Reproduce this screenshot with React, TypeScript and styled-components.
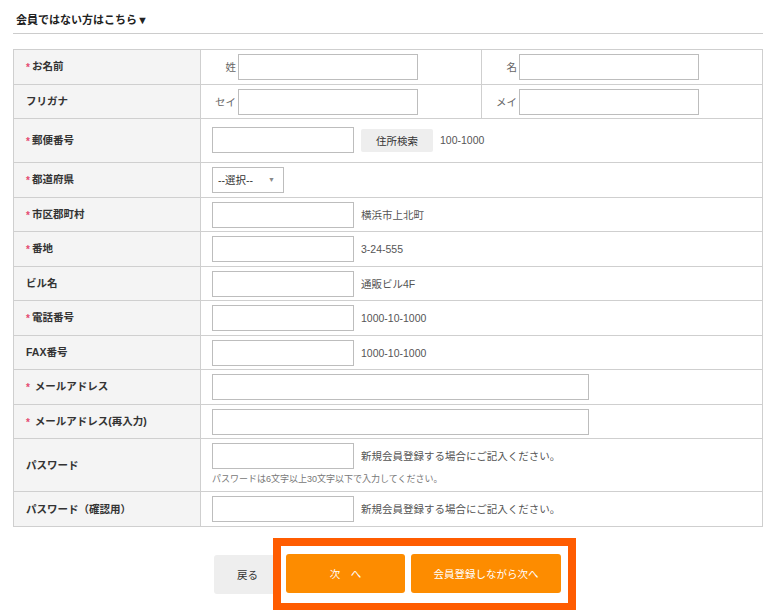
import React from 'react';
import styled, { createGlobalStyle } from 'styled-components';

const GlobalStyle = createGlobalStyle`
  body {
    margin: 0;
    background: #ffffff;
    font-family: "Liberation Sans", "Noto Sans CJK JP", sans-serif;
    color: #333333;
  }
`;

const Page = styled.div`
  width: 750px;
  margin-left: 13px;
`;

const Heading = styled.h2`
  margin: 0;
  padding: 12px 3px 5px;
  font-size: 11px;
  line-height: 16px;
  font-weight: bold;
  color: #222222;
  border-bottom: 1px solid #cccccc;
`;

const Table = styled.table`
  width: 100%;
  margin-top: 15px;
  border-collapse: collapse;
  border: 1px solid #cfcfcf;
`;

const Label = styled.th`
  width: 162px;
  padding: 0 12px;
  background: #f4f4f4;
  border: 1px solid #cfcfcf;
  text-align: left;
  vertical-align: middle;
  font-size: 10.5px;
  line-height: 14px;
  font-weight: bold;
  color: #333333;
  white-space: nowrap;
`;

const Required = styled.span`
  color: #e4486f;
  font-size: 10px;
  margin-right: 2px;
  position: relative;
  top: 1px;
`;

const Cell = styled.td<{ $pad?: string }>`
  padding: ${(p) => p.$pad || '4px 11px 3.5px'};
  border: 1px solid #cfcfcf;
  vertical-align: middle;
  line-height: 14px;
`;

const Line = styled.div`
  display: flex;
  align-items: center;
  height: 26px;
`;

const Halves = styled.div`
  display: flex;
`;

const Half = styled.div<{ $first?: boolean }>`
  flex: 1;
  display: flex;
  align-items: center;
  padding: 4px 0 3.5px 11px;
  border-right: ${(p) => (p.$first ? '1px solid #cfcfcf' : 'none')};
`;

const SubLabel = styled.span`
  width: 24px;
  margin-right: 2px;
  text-align: right;
  font-size: 10.5px;
  color: #666666;
`;

const Input = styled.input<{ $w?: number }>`
  box-sizing: border-box;
  width: ${(p) => p.$w || 142}px;
  height: 26px;
  margin: 0;
  padding: 2px 5px;
  border: 1px solid #bdbdbd;
  background: #ffffff;
  font-size: 11px;
  outline: none;
`;

const Hint = styled.span`
  margin-left: 7px;
  font-size: 10.5px;
  color: #555555;
`;

const Note = styled.div`
  margin-top: 4px;
  margin-bottom: 2px;
  font-size: 9px;
  line-height: 12px;
  color: #777777;
`;

const SearchButton = styled.button`
  width: 72px;
  height: 23px;
  margin-left: 7px;
  padding: 0;
  border: none;
  border-radius: 2px;
  background: #eeeeee;
  font-family: inherit;
  font-size: 10.5px;
  color: #333333;
`;

const SelectWrap = styled.div`
  position: relative;
  width: 72px;
  height: 26px;
`;

const Select = styled.select`
  appearance: none;
  box-sizing: border-box;
  width: 72px;
  height: 26px;
  margin: 0;
  padding: 0 0 0 5px;
  border: 1px solid #bdbdbd;
  border-radius: 0;
  background: #ffffff;
  font-family: inherit;
  font-size: 10.5px;
  color: #333333;
`;

const Arrow = styled.span`
  position: absolute;
  right: 9px;
  top: 9px;
  font-size: 7px;
  line-height: 8px;
  color: #888888;
  pointer-events: none;
`;

const Actions = styled.div`
  display: flex;
  justify-content: center;
  align-items: center;
  margin-top: 11px;
  padding-left: 14px;
`;

const BackButton = styled.button`
  width: 67px;
  height: 39px;
  margin-right: -8px;
  padding: 0;
  border: none;
  border-radius: 3px;
  background: #eeeeee;
  font-family: inherit;
  font-size: 10.5px;
  color: #333333;
`;

const Highlight = styled.div`
  position: relative;
  display: flex;
  gap: 6px;
  padding: 8px 7px 10px 5px;
  border: 8px solid #ff5c00;
  background: #ffffff;
`;

const NextButton = styled.button<{ $w: number }>`
  width: ${(p) => p.$w}px;
  height: 39px;
  padding: 0;
  border: none;
  border-radius: 3px;
  background: #fd8c00;
  font-family: inherit;
  font-size: 10.5px;
  color: #ffffff;
`;

type Row = { label: string; required?: boolean; hint?: string; wide?: boolean };

const rows: Row[] = [
  { label: '市区郡町村', required: true, hint: '横浜市上北町' },
  { label: '番地', required: true, hint: '3-24-555' },
  { label: 'ビル名', hint: '通販ビル4F' },
  { label: '電話番号', required: true, hint: '1000-10-1000' },
  { label: 'FAX番号', hint: '1000-10-1000' },
  { label: ' メールアドレス', required: true, wide: true },
  { label: ' メールアドレス(再入力)', required: true, wide: true },
];

const Head: React.FC<{ text: string; required?: boolean }> = ({ text, required }) => (
  <Label>
    {required && <Required>*</Required>}
    {text}
  </Label>
);

const App: React.FC = () => {
  return (
    <Page>
      <GlobalStyle />
      <Heading>会員ではない方はこちら▼</Heading>
      <Table>
        <tbody>
          <tr>
            <Head text="お名前" required />
            <Cell $pad="0">
              <Halves>
                <Half $first>
                  <SubLabel>姓</SubLabel>
                  <Input $w={180} />
                </Half>
                <Half>
                  <SubLabel>名</SubLabel>
                  <Input $w={180} />
                </Half>
              </Halves>
            </Cell>
          </tr>
          <tr>
            <Head text="フリガナ" />
            <Cell $pad="0">
              <Halves>
                <Half $first>
                  <SubLabel>セイ</SubLabel>
                  <Input $w={180} />
                </Half>
                <Half>
                  <SubLabel>メイ</SubLabel>
                  <Input $w={180} />
                </Half>
              </Halves>
            </Cell>
          </tr>
          <tr>
            <Head text="郵便番号" required />
            <Cell $pad="8px 11px 9px">
              <Line>
                <Input />
                <SearchButton>住所検索</SearchButton>
                <Hint>100-1000</Hint>
              </Line>
            </Cell>
          </tr>
          <tr>
            <Head text="都道府県" required />
            <Cell>
              <SelectWrap>
                <Select defaultValue="">
                  <option value="">--選択--</option>
                </Select>
                <Arrow>▼</Arrow>
              </SelectWrap>
            </Cell>
          </tr>
          {rows.map((r) => (
            <tr key={r.label}>
              <Head text={r.label} required={r.required} />
              <Cell>
                <Line>
                  <Input $w={r.wide ? 377 : 142} />
                  {r.hint && <Hint>{r.hint}</Hint>}
                </Line>
              </Cell>
            </tr>
          ))}
          <tr>
            <Head text="パスワード" />
            <Cell $pad="4px 11px">
              <Line>
                <Input type="password" />
                <Hint>新規会員登録する場合にご記入ください。</Hint>
              </Line>
              <Note>パスワードは6文字以上30文字以下で入力してください。</Note>
            </Cell>
          </tr>
          <tr>
            <Head text="パスワード（確認用）" />
            <Cell>
              <Line>
                <Input type="password" />
                <Hint>新規会員登録する場合にご記入ください。</Hint>
              </Line>
            </Cell>
          </tr>
        </tbody>
      </Table>
      <Actions>
        <BackButton>戻る</BackButton>
        <Highlight>
          <NextButton $w={119}>次　へ</NextButton>
          <NextButton $w={150}>会員登録しながら次へ</NextButton>
        </Highlight>
      </Actions>
    </Page>
  );
};

export default App;
